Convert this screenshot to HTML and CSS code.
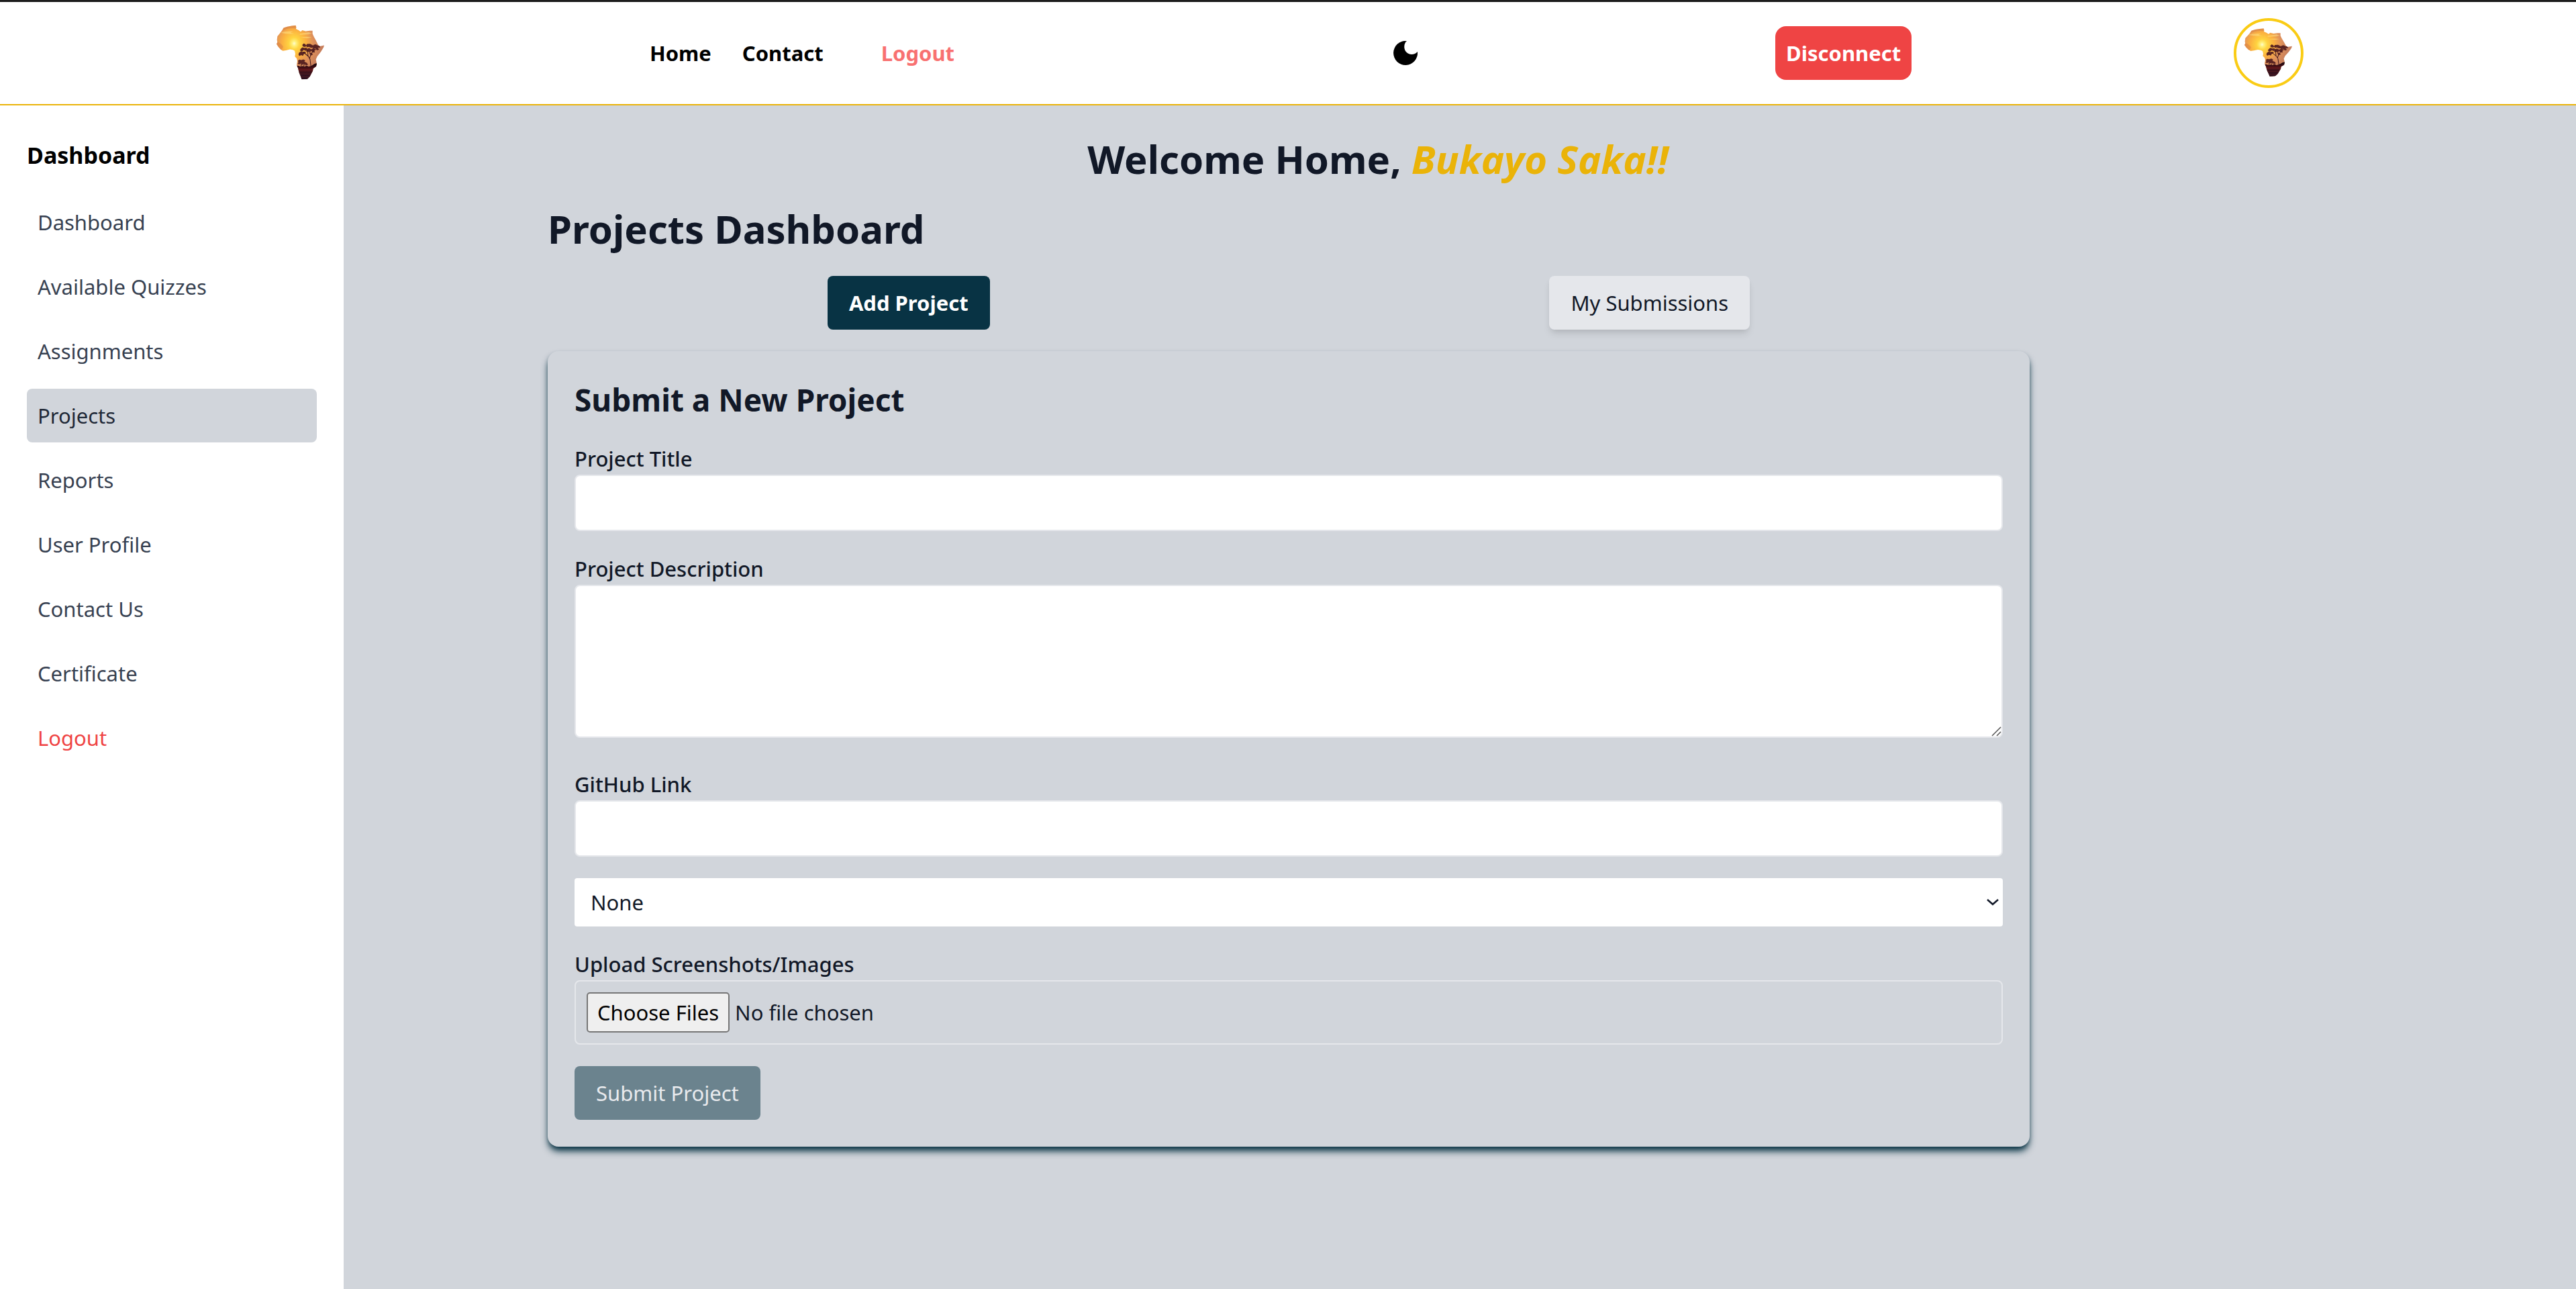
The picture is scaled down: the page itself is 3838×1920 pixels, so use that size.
FILE: index.html
```html
<!DOCTYPE html>
<html lang="en">
<head>
  <meta charset="UTF-8">
  <meta name="viewport" content="width=device-width, initial-scale=1.0">
  <title>Projects Dashboard</title>
  <link rel="stylesheet" href="styles.css">
</head>
<body>

<!-- shared logo artwork -->
<svg class="sprite" aria-hidden="true">
  <defs>
    <radialGradient id="sky" gradientUnits="userSpaceOnUse" cx="211" cy="199" r="120">
      <stop offset="0" stop-color="#fffbd0"/>
      <stop offset="0.08" stop-color="#fff07a"/>
      <stop offset="0.2" stop-color="#ffd441"/>
      <stop offset="0.45" stop-color="#fbb040"/>
      <stop offset="0.7" stop-color="#e0925a"/>
      <stop offset="1" stop-color="#c87f5c"/>
    </radialGradient>
    <linearGradient id="ground" x1="0" y1="0" x2="0" y2="1">
      <stop offset="0" stop-color="#14060c"/>
      <stop offset="0.25" stop-color="#3a0d14"/>
      <stop offset="0.4" stop-color="#5c1519"/>
      <stop offset="0.6" stop-color="#3a121c"/>
      <stop offset="1" stop-color="#2a1020"/>
    </linearGradient>
    <clipPath id="continent">
      <path d="M218 127L200 129L180 132L163 137L157 147L150 155L143 163L136 170L134 185L136 194L132 201L140 212L150 222L160 228L175 226L192 222L205 224L213 228L216 240L214 250L222 258L225 268L222 285L228 297L233 315L240 330L245 342L258 341L270 340L281 330L288 318L294 308L296 298L309 290L312 280L308 262L314 250L330 232L342 215L345 206L325 210L318 205L307 185L299 172L293 160L293 148L280 148L262 150L247 146L240 152L232 147L219 141L220 135Z"/>
    </clipPath>
  </defs>
  <symbol id="africa" viewBox="96 93 288 288" preserveAspectRatio="none">
    <g clip-path="url(#continent)">
      <rect x="120" y="120" width="240" height="230" fill="url(#sky)"/>
      <path d="M150 156q25-8 56-5l-12 5 18 4q-30 3-62-4zM236 160l40-6 14 5-16 4-38 1zM240 175q25-5 50-1l-20 4z" fill="#ffe58a" opacity="0.5"/>
      <path d="M132 190q22 8 30 22l-10 16-25-10zM180 120h45v20q-40-6-70 10z" fill="#cf7440" opacity="0.4"/>
      <g fill="#5a2422">
        <path d="M247 205l6-6 7 2 6 8-7 4-9-2zM268 201l14-1 12 6 3 9-11 1-9-4-9 2-4-7zM297 205l9-3 11 5 11 1-3 8-9-1 6 8-9 3-8-8-9 0-4-7zM238 222l9-8 11 3 7-2 6 8-8 5-9-3-8 6-8-3zM268 220l10-3 9 5 10-5 12 6-8 5 3 6-9 1-7-6-9 5-8-4-7 3zM232 236l9-6 8 3 10-2 5 6-9 3-5 8-8-3-8 4-4-6zM279 234l9 2 7 6-8 5-7-6z"/>
        <path d="M227 268l7-5 9 2 9-3 9 4-5 4 8 4-7 3 5 6-8-2-9 3-4-6-7 4-8-2 4-8zM256 275l11 0 6 8-10 4z"/>
      </g>
      <path d="M250 232l12 9 13 10 7 12 4 30M271 225l2 26M298 226l-13 17-5 15M242 280v13M256 280l-3 13" fill="none" stroke="#3d161c" stroke-width="3"/>
      <path d="M220 289q7-4 14 0t14-1q8 5 14 1t12 2q12-1 20-7t22-7v18l-16 8v38h-82z" fill="url(#ground)"/>
      <path d="M229 304h68M234 320h58M240 332h42" stroke="#7d2a2c" stroke-width="2" opacity="0.6"/>
    </g>
  </symbol>
</svg>

<header class="navbar">
  <a class="logo" href="#" aria-label="Home page">
    <svg class="logo-img"><use href="#africa"/></svg>
  </a>
  <nav class="nav-links">
    <a href="#">Home</a>
    <a href="#">Contact</a>
    <a class="nav-logout" href="#">Logout</a>
  </nav>
  <button class="theme-toggle" type="button" aria-label="Toggle dark mode">
    <svg class="moon" viewBox="0 0 36 36"><path d="M20 0A18 18 0 1 0 36 16C31 22 22 21 18 15C15 10 16 3 20 0Z"/></svg>
  </button>
  <button class="disconnect" type="button">Disconnect</button>
  <a class="avatar" href="#" aria-label="Profile">
    <svg class="avatar-img"><use href="#africa"/></svg>
  </a>
</header>

<div class="layout">
  <aside class="sidebar">
    <h2 class="sidebar-title">Dashboard</h2>
    <nav class="side-nav">
      <a href="#">Dashboard</a>
      <a href="#">Available Quizzes</a>
      <a href="#">Assignments</a>
      <a class="active" href="#">Projects</a>
      <a href="#">Reports</a>
      <a href="#">User Profile</a>
      <a href="#">Contact Us</a>
      <a href="#">Certificate</a>
      <a class="side-logout" href="#">Logout</a>
    </nav>
  </aside>

  <main class="content">
    <h1 class="welcome">Welcome Home, <em>Bukayo Saka!!</em></h1>
    <h1 class="page-title">Projects Dashboard</h1>

    <div class="tabs">
      <button class="btn btn-primary" type="button">Add Project</button>
      <button class="btn btn-light" type="button">My Submissions</button>
    </div>

    <form class="card">
      <h2 class="card-title">Submit a New Project</h2>

      <div class="field">
        <label for="title">Project Title</label>
        <input class="control" type="text" id="title">
      </div>

      <div class="field field-area">
        <label for="description">Project Description</label>
        <textarea class="control" id="description" rows="4"></textarea>
      </div>

      <div class="field">
        <label for="github">GitHub Link</label>
        <input class="control" type="text" id="github">
      </div>

      <div class="field">
        <select class="select" id="group" aria-label="Group">
          <option>None</option>
        </select>
      </div>

      <div class="field">
        <label for="images">Upload Screenshots/Images</label>
        <input class="control file" type="file" id="images" multiple>
      </div>

      <button class="btn btn-submit" type="submit" disabled>Submit Project</button>
    </form>
  </main>
</div>

</body>
</html>
```
FILE: styles.css
```css
* {
  box-sizing: border-box;
  margin: 0;
}

body {
  display: flex;
  flex-direction: column;
  min-height: 100vh;
  border-top: 3px solid #1c1c1c;
  background-color: #d1d5db;
  color: #111827;
  font-family: "Noto Sans", sans-serif;
  font-size: 31px;
  line-height: 48px;
}

a {
  color: inherit;
  text-decoration: none;
}

button, input, select, textarea {
  font: inherit;
  color: inherit;
}

button {
  border: none;
  cursor: pointer;
}

.sprite {
  position: absolute;
  width: 0;
  height: 0;
}

/* Navbar */
.navbar {
  display: grid;
  grid-template-columns: 568fr 1108fr 569fr 683fr 104px;
  align-items: center;
  justify-items: start;
  padding: 22px 406px 22px 400px;
  background-color: #fff;
  border-bottom: 2px solid #eab308;
  color: #000;
  font-weight: 700;
}

.logo-img {
  display: block;
  width: 96px;
  height: 108px;
}

.nav-links {
  display: flex;
  gap: 46px;
}

.nav-logout {
  margin-left: 40px;
  color: #f87171;
}

.theme-toggle {
  padding: 0;
  background: none;
}

.moon {
  display: block;
  width: 36px;
  height: 36px;
}

.disconnect {
  padding: 16px;
  border-radius: 16px;
  background-color: #ef4444;
  color: #fff;
}

.avatar {
  border: 4px solid #facc15;
  border-radius: 50%;
}

.avatar-img {
  display: block;
  width: 96px;
  height: 96px;
}

/* Sidebar */
.layout {
  display: flex;
  flex: 1;
}

.sidebar {
  width: 512px;
  padding: 46px 40px;
  background-color: #fff;
}

.sidebar-title {
  margin-bottom: 32px;
  color: #000;
  font-size: 34px;
  line-height: 56px;
}

.side-nav {
  display: flex;
  flex-direction: column;
  gap: 16px;
  color: #374151;
}

.side-nav a {
  padding: 16px;
  border-radius: 8px;
}

.side-nav .active {
  background-color: #d1d5db;
  color: #1f2937;
}

.side-nav .side-logout {
  color: #ef4444;
}

/* Content */
.content {
  flex: 1;
  padding: 44px 814px 46px 304px;
}

.welcome, .page-title {
  margin-bottom: 32px;
  font-size: 58px;
  line-height: 72px;
}

.page-title {
  margin-bottom: 34px;
}

.welcome {
  padding-left: 266px;
  text-align: center;
}

.welcome em {
  color: #eab308;
}

.tabs {
  display: flex;
  justify-content: space-around;
  margin-bottom: 32px;
}

.btn {
  padding: 16px 32px;
  border-radius: 8px;
}

.btn-primary {
  background-color: #083344;
  color: #fff;
  font-weight: 700;
}

.btn-light {
  background-color: #e5e7eb;
  box-shadow: 0 8px 12px -2px rgba(0, 0, 0, 0.1), 0 4px 8px -4px rgba(0, 0, 0, 0.1);
}

.card {
  padding: 40px;
  border-radius: 16px;
  box-shadow: 0 8px 12px -2px #083344, 0 4px 8px -4px #083344;
  background-color: #d1d5db;
}

.card-title {
  margin-bottom: 32px;
  font-size: 46px;
  line-height: 64px;
}

.field {
  margin-bottom: 32px;
}

.field-area {
  margin-bottom: 45px;
}

.field label {
  display: block;
  font-weight: 500;
}

.control {
  display: block;
  width: 100%;
  padding: 16px;
  border: 2px solid #e5e7eb;
  border-radius: 8px;
  background-color: #fff;
}

input.control {
  height: 84px;
}

textarea.control {
  resize: vertical;
}

textarea::-webkit-resizer {
  background: url("data:image/svg+xml,%3Csvg xmlns='http://www.w3.org/2000/svg' viewBox='0 0 15 15'%3E%3Cpath d='M1 14L14 1M8 14L14 8' stroke='%23555' stroke-width='1.5'/%3E%3C/svg%3E") no-repeat;
}

.select {
  display: block;
  width: 100%;
  height: 72px;
  padding: 0 24px;
  border: none;
  border-radius: 4px;
  appearance: none;
  background: #fff url("data:image/svg+xml,%3Csvg xmlns='http://www.w3.org/2000/svg' width='18' height='12' viewBox='0 0 18 12'%3E%3Cpath d='M1 2L9 9L17 2' fill='none' stroke='%23111827' stroke-width='2.5'/%3E%3C/svg%3E") no-repeat right 6px center;
}

input.file {
  height: 96px;
  background-color: transparent;
}

.file::file-selector-button {
  height: 60px;
  margin-right: 8px;
  padding: 0 14px;
  border: 2px solid #767676;
  border-radius: 5px;
  background-color: #efefef;
  color: #000;
  font: inherit;
}

.btn-submit {
  background-color: #083344;
  color: #fff;
  opacity: 0.5;
}
```
